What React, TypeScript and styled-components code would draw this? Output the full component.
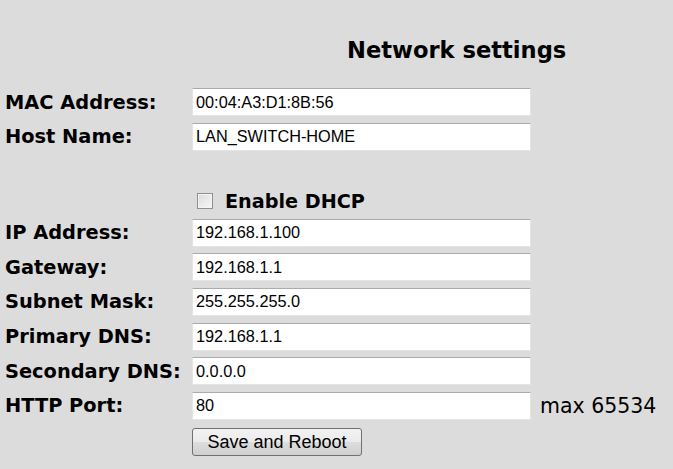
import { Fragment } from 'react';
import styled, { createGlobalStyle } from 'styled-components';

const GlobalStyle = createGlobalStyle`
  html, body {
    margin: 0;
    padding: 0;
    background: #dcdcdc;
  }
  body {
    font-family: "DejaVu Sans", Verdana, sans-serif;
    color: #000;
  }
`;

const Page = styled.div`
  width: 673px;
  height: 469px;
  padding: 0 0 0 5px;
  box-sizing: border-box;
  overflow: hidden;
`;

const Title = styled.h1`
  margin: 36px 0 0 342px;
  font-size: 22.6px;
  line-height: 28px;
  font-weight: bold;
`;

const Form = styled.form`
  display: grid;
  grid-template-columns: 187px 339px auto;
  row-gap: 6.6px;
  align-items: center;
  margin-top: 24px;
`;

const Label = styled.label`
  grid-column: 1;
  font-size: 19.4px;
  font-weight: bold;
  white-space: nowrap;
`;

const Field = styled.input`
  grid-column: 2;
  box-sizing: border-box;
  width: 339px;
  height: 28px;
  margin: 0;
  padding: 0 3px;
  background: #fff;
  border: 1px solid #e4e4e4;
  border-top-color: #ababab;
  font-family: "Liberation Sans", Arial, sans-serif;
  font-size: 16.3px;
  color: #000;
  outline: none;
`;

const Note = styled.span`
  grid-column: 3;
  margin-left: 9px;
  font-size: 20.5px;
  white-space: nowrap;
`;

const CheckRow = styled.label<{ $gap: number }>`
  grid-column: 2;
  display: flex;
  align-items: center;
  gap: 12px;
  margin-top: ${(p) => p.$gap}px;
  padding-left: 5px;
  height: 22px;
  font-size: 19.2px;
  font-weight: bold;
`;

const Check = styled.input`
  appearance: none;
  box-sizing: border-box;
  width: 16px;
  height: 16px;
  margin: 0;
  border: 1px solid #8e8f8f;
  background: linear-gradient(135deg, #dcdcdc 0%, #f7f7f7 100%);
  box-shadow: inset 0 0 0 1px #f4f4f4;
`;

const Button = styled.button`
  grid-column: 2;
  justify-self: start;
  width: 170px;
  height: 28px;
  margin-top: 2px;
  padding: 0;
  border: 1px solid #707070;
  border-radius: 3px;
  background: linear-gradient(#f2f2f2 0%, #ebebeb 50%, #dddddd 51%, #cfcfcf 100%);
  font-family: "Liberation Sans", Arial, sans-serif;
  font-size: 18px;
  color: #000;
`;

const fields = [
  { label: 'IP Address:', value: '192.168.1.100' },
  { label: 'Gateway:', value: '192.168.1.1' },
  { label: 'Subnet Mask:', value: '255.255.255.0' },
  { label: 'Primary DNS:', value: '192.168.1.1' },
  { label: 'Secondary DNS:', value: '0.0.0.0' },
];

export default function App() {
  return (
    <Page>
      <GlobalStyle />
      <Title>Network settings</Title>
      <Form onSubmit={(e) => e.preventDefault()}>
        <Label>MAC Address:</Label>
        <Field type="text" defaultValue="00:04:A3:D1:8B:56" />
        <Label>Host Name:</Label>
        <Field type="text" defaultValue="LAN_SWITCH-HOME" />

        <CheckRow $gap={33}>
          <Check type="checkbox" />
          Enable DHCP
        </CheckRow>

        {fields.map((f) => (
          <Fragment key={f.label}>
            <Label>{f.label}</Label>
            <Field type="text" defaultValue={f.value} />
          </Fragment>
        ))}

        <Label>HTTP Port:</Label>
        <Field type="text" defaultValue="80" />
        <Note>max 65534</Note>

        <Button type="submit">Save and Reboot</Button>
      </Form>
    </Page>
  );
}
